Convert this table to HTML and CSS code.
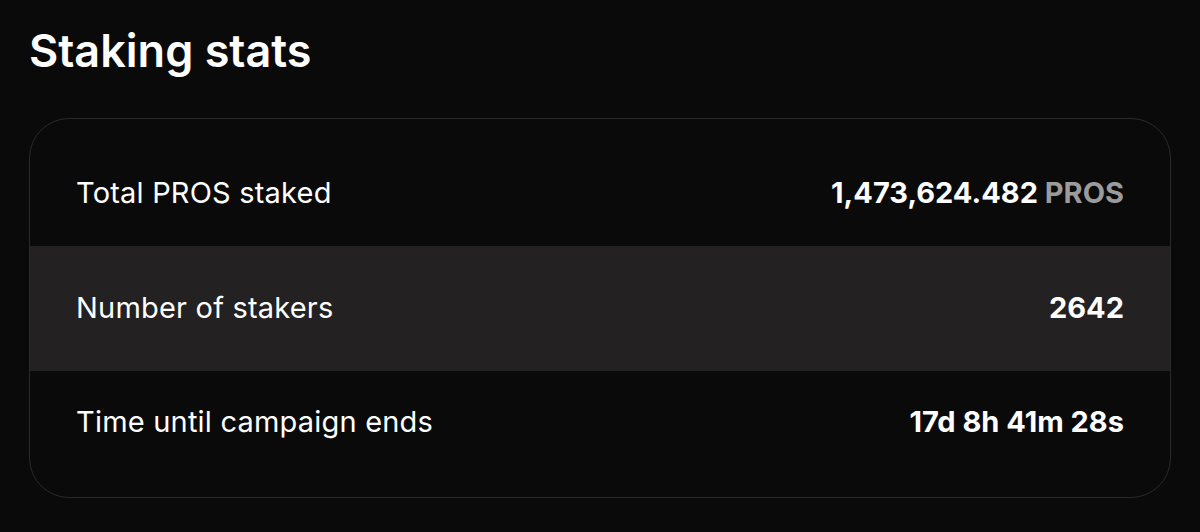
FILE: index.html
```html
<!DOCTYPE html>
<html lang="en">
<head>
<meta charset="utf-8">
<title>Staking stats</title>
<link rel="stylesheet" href="styles.css">
</head>
<body>
<main class="page">
  <h1 class="title">Staking stats</h1>
  <section class="card">
    <div class="row row-first">
      <span class="label">Total PROS staked</span>
      <span class="value">1,473,624.482 <span class="unit">PROS</span></span>
    </div>
    <div class="row row-mid">
      <span class="label">Number of stakers</span>
      <span class="value">2642</span>
    </div>
    <div class="row row-last">
      <span class="label">Time until campaign ends</span>
      <span class="value">17d 8h 41m 28s</span>
    </div>
  </section>
</main>
</body>
</html>
```
FILE: styles.css
```css
html, body {
  margin: 0;
  padding: 0;
  background: #0a0a0a;
  color: #ffffff;
  font-family: Inter, "Noto Sans", "Liberation Sans", sans-serif;
}

.page {
  padding: 25px 29px 0 29px;
}

.title {
  margin: 0 0 41px 0;
  font-size: 45px;
  line-height: 52px;
  font-weight: 600;
  letter-spacing: 0;
}

.card {
  border: 1px solid #2a2a2a;
  border-radius: 40px;
  overflow: hidden;
  display: flex;
  flex-direction: column;
}

.row {
  display: flex;
  justify-content: space-between;
  align-items: center;
  padding: 0 46px;
  font-size: 29px;
  line-height: 36px;
}

.row-first {
  padding-top: 56px;
  padding-bottom: 35px;
}

.row-mid {
  background: #232122;
  padding-top: 44px;
  padding-bottom: 45px;
}

.row-last {
  padding-top: 33px;
  padding-bottom: 57px;
}

.label {
  font-weight: 400;
  letter-spacing: 0.2px;
}

.value {
  font-weight: 700;
}

.unit {
  color: #9b9b9b;
}
```
